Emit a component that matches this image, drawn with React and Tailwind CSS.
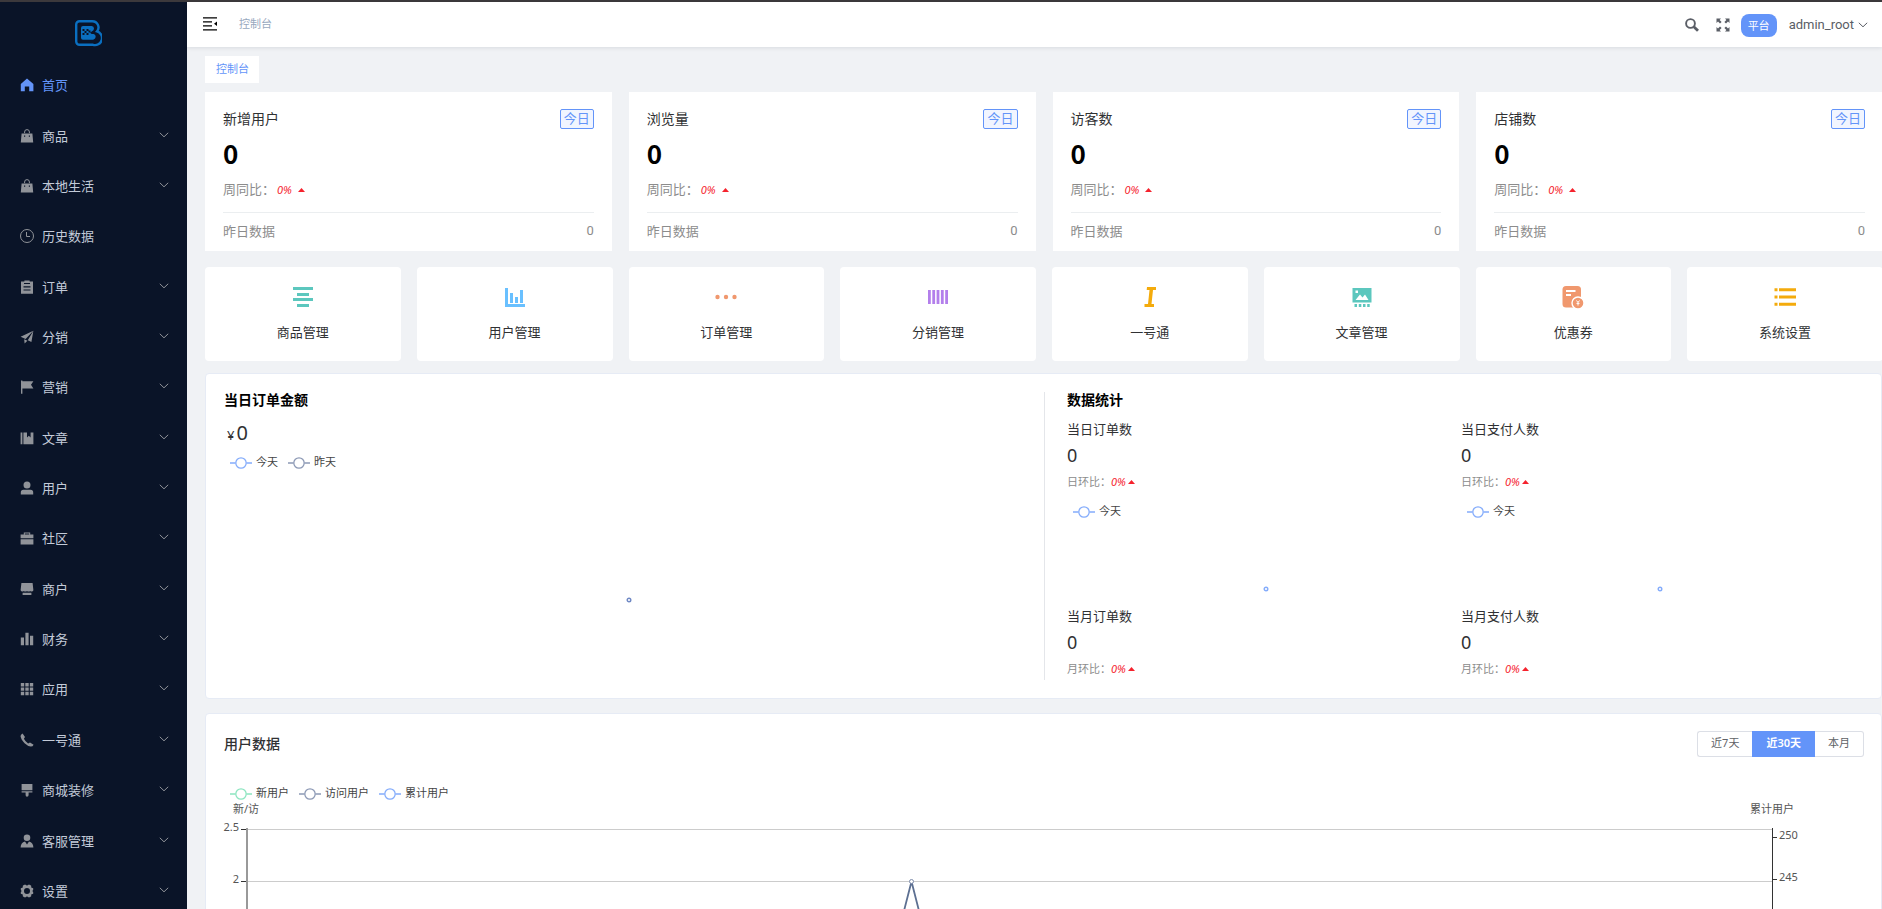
const cjk = "font-['Noto_Sans','Noto_Sans_CJK_SC',sans-serif]";

/* ---------- sidebar icons, drawn on a 14 unit grid ---------- */
const MENU_ICONS = {
  home: <path d="M7 .6 13.4 6v7.2H9.2V8.6H4.8v4.6H.8V6z" />,
  goods: (
    <>
      <path d="M4.6 4.2V3a2.4 2.4 0 0 1 4.8 0v1.2" fill="none" stroke="currentColor" />
      <path fillRule="evenodd" d="M1.6 4.4h10.8l.8 9H.8zM4 6.4v1.400h1.200V6.400zm4.800 0v1.400H10V6.400z" />
    </>
  ),
  clock: (
    <g fill="none" stroke="currentColor">
      <circle cx="7" cy="7" r="6.5" />
      <path d="M6.500 3v4.500h3.500" />
    </g>
  ),
  order: (
    <path fillRule="evenodd" d="M1 1.6h3.400V.4h5.200v1.200H13V13.800H1zM4 3v1h6V3zM3.500 6.200v1.200h7V6.200zM3.500 9.400v1.200h7V9.400z" />
  ),
  promotion: (
    <>
      <path d="M13.400.8 11.400 12 7.800 10.200 13.400.8 5.600 9 .6 6.800z" />
      <path d="M4.200 9.200 7.400 10.800 4.600 13.600z" />
    </>
  ),
  flag: <path d="M1 .4h1.400v.8h11L11 4.800l2.400 3.800h-11v5.200H1z" />,
  article: <path d="M.6 1.400h1.800v11.800H.6zM3.400 1.400H7v5l1.800-1.600 1.800 1.600v-5h2.800v11.800h-10z" />,
  user: <path d="M7 .4a3.500 3.500 0 1 1 0 7 3.500 3.500 0 0 1 0-7zM.8 13.600v-2.200q0-2.600 2.600-2.600h7.200q2.600 0 2.600 2.600v2.200z" />,
  briefcase: (
    <path fillRule="evenodd" d="M3.800 3.400V1.600h6.400v1.800h3.200v3.800H.6V3.400zm1-.8v.8h4.400v-.8zM.6 8.200h12.800v5.200H.6z" />
  ),
  shop: <path d="M1.400 1h11.200l.8 7.200q-.4 1.400-1.800 1.400-.8 0-1.400-.6-.6.6-1.600.6T7 9q-.6.6-1.600.6T3.800 9q-.6.6-1.400.6Q1 9.600.6 8.200zM2.600 10.800h8.800V13H2.600z" />,
  data: <path d="M.8 5.600h3.200v7.600H.8zM5.400.8h3.200v12.400H5.400zM10 3.800h3.200v9.400H10z" />,
  grid: <path d="M.8 1h3.400v3.400H.8zm4.500 0h3.400v3.400H5.300zm4.500 0h3.400v3.400H9.800zM.8 5.400h3.400v3.400H.8zm4.500 0h3.400v3.400H5.300zm4.500 0h3.400v3.400H9.800zM.8 9.800h3.400v3.400H.8zm4.500 0h3.400v3.400H5.300zm4.500 0h3.400v3.400H9.800z" />,
  phone: <path d="M2.600.6 5 4 3.900 5.800q1.400 2.800 4.200 4.600L10 9.500l3.600 2.200q-.8 1.900-2.800 1.900-3-.4-6.200-3.400Q.8 6 .5 2.900 1 1.300 2.600.6z" />,
  brush: <path d="M1.600 1h10.800v6.200H1.600zM1.600 8.200h10.800v1.400H8.600V12q0 1.400-1.600 1.800Q5.600 13.400 5.600 12V9.600h-4z" />,
  service: <path d="M7 .4a3.300 3.300 0 1 1 0 6.600A3.300 3.300 0 0 1 7 .4zM.6 13.600q.2-5 4.400-6l2 3 2-3q4.200 1 4.400 6z" />,
  tools: (
    <path fillRule="evenodd" d="M4.200.8h1.600L7 1.800 8.200.8h1.600l1.400 1v1.600l2 .8v1.600L12.400 7l.8 1.200v1.600l-2 .8v1.600l-1.400 1H8.200L7 12.200l-1.200 1H4.200l-1.400-1v-1.600l-2-.8V8.200L1.600 7 .8 5.800V4.200l2-.8V1.800zM7 4a3 3 0 1 0 0 6 3 3 0 0 0 0-6z" />
  ),
};

const MENU = [
  ["首页", "home"],
  ["商品", "goods"],
  ["本地生活", "goods"],
  ["历史数据", "clock"],
  ["订单", "order"],
  ["分销", "promotion"],
  ["营销", "flag"],
  ["文章", "article"],
  ["用户", "user"],
  ["社区", "briefcase"],
  ["商户", "shop"],
  ["财务", "data"],
  ["应用", "grid"],
  ["一号通", "phone"],
  ["商城装修", "brush"],
  ["客服管理", "service"],
  ["设置", "tools"],
];
const LEAVES = ["首页", "历史数据"];

function Chevron({ className }) {
  return (
    <svg viewBox="0 0 10 6" className={className} fill="none" stroke="currentColor" aria-hidden="true">
      <path d="M.8.8 5 4.800 9.200.8" />
    </svg>
  );
}

function Logo() {
  return (
    <svg viewBox="0 0 28 28" className="h-7 w-7" aria-hidden="true">
      <path
        d="M5.500 2.200h12.700a6.200 6.200 0 0 1 4.800 10.200A6.900 6.900 0 0 1 19 25.800H5.500A3.300 3.300 0 0 1 2.200 22.500v-17A3.300 3.300 0 0 1 5.500 2.200z"
        fill="none"
        stroke="#0a6fc0"
        strokeWidth="2.400"
      />
      <path d="M9 7h8.700q2.300.3 2.300 2.400T17.700 12.400l-1.700 1.400 1.700 1.200h2q2 .6 2 2.800T19.200 20.800H9q-2 0-2-2V9q0-2 2-2z" fill="#0a6fc0" />
      <path d="M8.500 10h2v2h-2zm4 0h2v2h-2zm-2 2h2v2h-2zm4-.5h2v2h-2zm-6 2.500h2v2h-2zm4 0h2v2h-2z" fill="#0a1428" />
    </svg>
  );
}

function Sidebar() {
  return (
    <aside className="flex w-[187px] shrink-0 flex-col overflow-hidden bg-[#0a1428]">
      <a href="#home" aria-label="首页" className="flex h-[58px] shrink-0 items-start justify-center pt-[17px] pr-3">
        <Logo />
      </a>
      <nav className="shrink-0">
        <ul className="flex min-h-[856px] flex-col">
          {MENU.map(([label, icon]) => (
            <li key={label} className="flex flex-1 basis-[50px]">
              <a
                href={"#" + label}
                className={
                  "flex flex-1 items-center pr-[18px] pl-5 text-[13px] leading-5 " +
                  (icon === "home" ? "text-[#6394f9]" : "text-[#c3cbd9]")
                }
              >
                <svg
                  viewBox="0 0 14 14"
                  fill="currentColor"
                  aria-hidden="true"
                  className={"mr-2 h-3.5 w-3.5 " + (icon === "home" ? "text-[#6394f9]" : "text-[#909399]")}
                >
                  {MENU_ICONS[icon]}
                </svg>
                {label}
                {!LEAVES.includes(label) && <Chevron className="mb-0.5 ml-auto h-[6px] w-[10px] text-[#909399]" />}
              </a>
            </li>
          ))}
        </ul>
      </nav>
    </aside>
  );
}

function Header() {
  return (
    <header className="relative z-10 flex h-[45px] shrink-0 items-center bg-white pr-3.5 pb-0.5 pl-4 shadow-[0_1px_4px_rgba(0,21,41,0.1)]">
      <button type="button" aria-label="收起菜单" className="text-black">
        <svg viewBox="0 0 14 14" className="h-3.5 w-3.5" fill="none" stroke="currentColor" strokeWidth="1.200" aria-hidden="true">
          <path d="M0 .8h14M0 4.800h9M0 8.800h9M0 12.800h14" />
          <path d="M14 4.600v4.400L11 6.800z" fill="currentColor" stroke="none" />
        </svg>
      </button>
      <span className="ml-[22px] text-[11px] leading-5 text-[#97a8be]">控制台</span>
      <div className="ml-auto flex items-center pt-[3px]">
        <button type="button" aria-label="搜索" className="text-[#5a5e66]">
          <svg viewBox="0 0 14 14" className="h-3.5 w-3.5" fill="none" stroke="currentColor" aria-hidden="true">
            <circle cx="5.500" cy="5.500" r="4.400" strokeWidth="1.900" />
            <path d="M8.800 8.800l4.200 4" strokeWidth="2.800" />
          </svg>
        </button>
        <button type="button" aria-label="全屏" className="ml-[17px] text-[#5a5e66]">
          <svg viewBox="0 0 14 14" className="h-3.5 w-3.5" fill="currentColor" aria-hidden="true">
            <path d="M.5.5h4.500L3.600 2l2 2L4 5.600l-2-2L.5 5zM13.500.5v4.500L12 3.600l-2 2L8.400 4l2-2L9 .5zM.5 13.500V9L2 10.400l2-2L5.600 10l-2 2L5 13.500zM13.500 13.500H9l1.400-1.500-2-2L10 8.400l2 2L13.500 9z" />
          </svg>
        </button>
        <span className="ml-[11px] rounded-[8px] bg-[#6394f9] px-[7px] text-[11px] leading-[23px] text-white">平台</span>
        <button type="button" className="ml-3 flex items-center font-['Roboto','Noto_Sans_CJK_SC',sans-serif] text-[13px] leading-5 text-[#5a5e66]">
          admin_root
          <Chevron className="ml-1 h-[6px] w-[10px]" />
        </button>
      </div>
    </header>
  );
}

function Rate({ spaced }) {
  return (
    <span className={"flex items-center text-[11px] text-[#f5222d] italic " + (spaced ? "gap-1.5 pt-0.5" : "gap-0.5")}>
      0%
      <svg viewBox="0 0 7 4" className="h-1 w-[7px]" fill="currentColor" aria-hidden="true">
        <path d="M3.500 0 7 4H0z" />
      </svg>
    </span>
  );
}

function StatCard({ title }) {
  return (
    <section className="bg-white px-[18px] pt-[17px] pb-[10px]">
      <div className="flex h-5 items-center justify-between">
        <h2 className="text-sm leading-5 text-[#303133]">{title}</h2>
        <span className="rounded-[2px] border border-[#6394f9] bg-[#f1f5ff] px-[3px] pb-0.5 text-[13px] leading-4 text-[#6394f9]">今日</span>
      </div>
      <p className="mt-[9px] font-['Noto_Sans_CJK_SC',sans-serif] text-[26px] leading-[30px] font-bold text-black">0</p>
      <div className="mt-[11px] flex h-5 items-center gap-[2px] text-[13px] leading-5 text-[#8c8c8c]">
        周同比：
        <Rate spaced />
      </div>
      <div className="mt-[13px] flex justify-between border-t border-[#ebeef0] pt-2 text-[13px] leading-5 text-[#8c8c8c]">
        <span>昨日数据</span>
        <span className="font-['Roboto',sans-serif]">0</span>
      </div>
    </section>
  );
}

const LINKS = [
  ["商品管理", "text-[#5cc7be]", <path d="M2 2h20v3H2zM6 8h12v3H6zM2 13h20v3H2zM6 19h12v3H6z" />],
  ["用户管理", "text-[#69c0ff]", <path d="M2 3h3v16h17v3H2zM7 8h3v10H7zM12 12h3v6h-3zM17 5h3v13h-3z" />],
  [
    "订单管理",
    "text-[#f0986e]",
    <>
      <circle cx="3.500" cy="12" r="2.200" />
      <circle cx="12" cy="12" r="2.200" />
      <circle cx="20.500" cy="12" r="2.200" />
    </>,
  ],
  ["分销管理", "text-[#b37feb]", <path d="M2 5h2.800v14H2zM6.300 5h2.800v14H6.300zM10.600 5h2.800v14h-2.800zM14.900 5h2.800v14h-2.800zM19.200 5H22v14h-2.800z" />],
  ["一号通", "text-[#f4ab0c]", <path d="M9 2h9v3h-3l-1.500 14h2.500v3H6.500v-3H10L11.500 5H8.700z" />],
  [
    "文章管理",
    "text-[#5cc7be]",
    <path fillRule="evenodd" d="M2.500 3h19v14.500h-19zM5.500 5.500v2.500H8V5.500zM5.500 15h13l-3.500-5.500-2.500 3-2.500-3zM4.500 19H7v3H4.500zM8.800 19h2.500v3H8.800zM13 19h2.500v3H13zM17.200 19h2.500v3h-2.500z" />,
  ],
  [
    "优惠券",
    "text-[#f0986e]",
    <>
      <rect x="1.500" y="1" width="18.500" height="21.500" rx="3.500" />
      <path d="M5 6h9.500M5 10h5" stroke="#fff" strokeWidth="1.800" />
      <circle cx="17" cy="18" r="6" stroke="#fff" strokeWidth="1.400" />
      <path d="M15.500 15.500l1.500 2 1.500-2M17 17.500V20.500M15.500 18.400h3" fill="none" stroke="#fff" />
    </>,
  ],
  ["系统设置", "text-[#f4ab0c]", <path d="M1.500 3.300h3v3h-3zM6 3.300h17v3H6zM1.500 10.500h3v3h-3zM6 10.500h17v3H6zM1.500 17.700h3v3h-3zM6 17.700h17v3H6z" />],
];

function QuickLink({ label, color, children }) {
  return (
    <a href={"#" + label} className="flex flex-col items-center rounded-[4px] bg-white pt-[18px] pb-[19px]">
      <svg viewBox="0 0 24 24" fill="currentColor" className={"h-6 w-6 " + color} aria-hidden="true">
        {children}
      </svg>
      <span className="mt-[13px] text-[13px] leading-5 text-[#303133]">{label}</span>
    </a>
  );
}

function Legend({ items }) {
  return (
    <ul className="flex gap-[10px] text-[11px] leading-4 text-[#444]">
      {items.map(([label, color]) => (
        <li key={label} className="flex items-center gap-1">
          <svg viewBox="0 0 22 12" className={"mt-0.5 h-3 w-[22px] " + color} fill="none" stroke="currentColor" strokeWidth="1.300" aria-hidden="true">
            <path d="M0 6h5.500M16.500 6H22" />
            <circle cx="11" cy="6" r="5.200" />
          </svg>
          {label}
        </li>
      ))}
    </ul>
  );
}

function Dot({ className }) {
  return (
    <svg viewBox="0 0 6 6" className={"h-1.5 w-1.5 " + className} fill="none" stroke="currentColor" strokeWidth="1.400" aria-hidden="true">
      <circle cx="3" cy="3" r="1.800" />
    </svg>
  );
}

function Metric({ title, compare, chart }) {
  return (
    <section>
      <h3 className="text-[13px] leading-5 text-[#303133]">{title}</h3>
      <p className="mt-1 text-lg leading-6 text-[#303133]">0</p>
      <div className="mt-[5px] flex items-center text-[11px] leading-5 text-[#8c8c8c]">
        {compare}：
        <Rate />
      </div>
      {chart && (
        <div className="mt-[11px] h-[103px] pl-1.5">
          <Legend items={[["今天", "text-[#84acfb]"]]} />
          <div className="flex justify-center pt-[67px] pr-0.5">
            <Dot className="text-[#84acfb]" />
          </div>
        </div>
      )}
    </section>
  );
}

function OrderPanel() {
  return (
    <section className="mt-3 flex rounded-[4px] border border-[#e6ebf5] bg-white py-[18px] pl-[18px]">
      <div className="flex-1 basis-[821px] border-r border-[#e4e6ea]">
        <h2 className="text-sm leading-4 font-semibold text-black">当日订单金额</h2>
        <p className="mt-[13px] flex h-6 items-baseline gap-0.5 pl-[3px] text-xl leading-6 text-[#303133]">
          <span className="text-[13px] leading-6">¥</span>0
        </p>
        <div className="mt-[9px] pl-1.5">
          <Legend
            items={[
              ["今天", "text-[#84acfb]"],
              ["昨天", "text-[#8c99b5]"],
            ]}
          />
        </div>
        <div className="flex justify-center pt-[127px] pr-2.5">
          <Dot className="text-[#6f88c4]" />
        </div>
      </div>
      <div className="flex-1 basis-[836px] pr-[26px] pb-px pl-[22px]">
        <h2 className="text-sm leading-4 font-semibold text-black">数据统计</h2>
        <div className="mt-[11px] grid grid-cols-2">
          <Metric title="当日订单数" compare="日环比" chart />
          <Metric title="当日支付人数" compare="日环比" chart />
          <Metric title="当月订单数" compare="月环比" />
          <Metric title="当月支付人数" compare="月环比" />
        </div>
      </div>
    </section>
  );
}

function UserChart() {
  return (
    <div className="flex text-[11px] leading-4 text-[#555]">
      <div className="flex w-[15px] shrink-0 flex-col items-end gap-[36px]">
        <span>2.5</span>
        <span>2</span>
      </div>
      <svg className="mt-[3px] ml-[2px] h-[80px] w-[5px] shrink-0 text-[#333]" stroke="currentColor" aria-hidden="true">
        <path d="M0 7.500h5M0 59.500h5" />
      </svg>
      <div className="mt-[9px] h-[120px] flex-1 border-r border-l-[2px] border-r-[#333] border-l-[#999]">
        <svg viewBox="0 0 1524 120" preserveAspectRatio="none" className="h-full w-full" fill="none" aria-hidden="true">
          <path d="M0 1.500h1524M0 53.500h1524M0 105.500h1524" stroke="#ccc" />
          <path d="M646.500 120 663.500 53.500 680.500 120" stroke="#5d7092" strokeWidth="1.800" />
          <circle cx="663.500" cy="53.500" r="2" fill="#fff" stroke="#7d8cab" />
        </svg>
      </div>
      <svg className="mt-[3px] h-[80px] w-1 shrink-0 text-[#333]" stroke="currentColor" aria-hidden="true">
        <path d="M0 15.500h4M0 57.500h4" />
      </svg>
      <div className="ml-0.5 flex w-[102px] shrink-0 flex-col gap-[26px] pt-2">
        <span>250</span>
        <span>245</span>
      </div>
    </div>
  );
}

function UserPanel() {
  const ranges = [
    ["近7天", "rounded-l-[3px] border border-r-0 border-[#dcdfe6] bg-white text-[#606266]"],
    ["近30天", "border border-[#6394f9] bg-[#6394f9] font-semibold text-white"],
    ["本月", "rounded-r-[3px] border border-l-0 border-[#dcdfe6] bg-white text-[#606266]"],
  ];
  return (
    <section className="mt-[14px] rounded-[4px] border border-[#e6ebf5] bg-white pt-[17px] pl-[18px]">
      <div className="flex h-[26px] items-center justify-between pr-[17px]">
        <h2 className="text-sm leading-5 font-medium text-[#303133]">用户数据</h2>
        <div className="flex">
          {ranges.map(([label, style]) => (
            <button key={label} type="button" className={"px-[13px] pb-0.5 text-[11px] leading-[22px] " + style}>
              {label}
            </button>
          ))}
        </div>
      </div>
      <div className="mt-[28px] pl-1.5">
        <Legend
          items={[
            ["新用户", "text-[#8ce5c0]"],
            ["访问用户", "text-[#8c99b5]"],
            ["累计用户", "text-[#84acfb]"],
          ]}
        />
      </div>
      <div className="flex justify-between pr-[87px] pl-[9px] text-[11px] leading-4 text-[#555]">
        <span>新/访</span>
        <span>累计用户</span>
      </div>
      <div className="mt-[2px]">
        <UserChart />
      </div>
    </section>
  );
}

export default function App() {
  return (
    <div className={"flex h-screen flex-col overflow-hidden bg-[#f0f2f5] " + cjk}>
      <div className="h-0.5 shrink-0 bg-[#3c393c]" />
      <div className="flex min-h-0 flex-1">
        <Sidebar />
        <div className="flex min-w-0 flex-1 flex-col">
          <Header />
          <main className="min-h-0 flex-1 overflow-hidden pt-[9px] pl-[18px]">
            <a href="#dashboard" className="inline-block bg-white pr-2.5 pb-0.5 pl-[11px] align-top text-[11px] leading-[25px] text-[#6394f9]">
              控制台
            </a>
            <div className="mt-[9px] -mr-px grid grid-cols-4 gap-x-[17px]">
              <StatCard title="新增用户" />
              <StatCard title="浏览量" />
              <StatCard title="访客数" />
              <StatCard title="店铺数" />
            </div>
            <div className="mt-4 -mr-px grid grid-cols-8 gap-x-4">
              {LINKS.map(([label, color, art]) => (
                <QuickLink key={label} label={label} color={color}>
                  {art}
                </QuickLink>
              ))}
            </div>
            <OrderPanel />
            <UserPanel />
          </main>
        </div>
      </div>
    </div>
  );
}
